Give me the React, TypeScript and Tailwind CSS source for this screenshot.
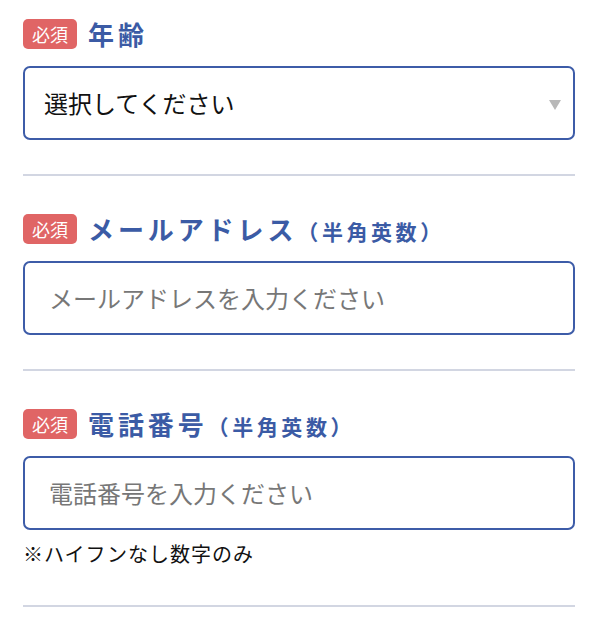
import React from "react";

const font = { fontFamily: '"Noto Sans CJK JP", "Noto Sans", sans-serif' };

function Badge() {
  return (
    <span className="inline-flex items-center justify-center w-[54px] h-[30px] rounded-[5px] bg-[#e06565] text-white text-[18px] leading-none shrink-0">
      必須
    </span>
  );
}

function Header({ title, sub }: { title: string; sub?: string }) {
  return (
    <div className="flex items-center gap-[11px] h-[30px]">
      <Badge />
      <span className="text-[#3b5ba5] font-bold text-[26px] tracking-[0.15em] leading-none">
        {title}
        {sub && <span className="text-[21px] tracking-[0.17em]">{sub}</span>}
      </span>
    </div>
  );
}

export default function App() {
  return (
    <div className="bg-white w-[598px] h-[626px] px-[23px] pt-[19px]" style={font}>
      {/* Age */}
      <div className="pb-[34px] border-b-2 border-[#d2d6e2]">
        <Header title="年齢" />
        <div className="mt-[17px] h-[74px] rounded-[7px] border-2 border-[#3d5ca8] flex items-center justify-between pl-[19px] pr-[12px]">
          <span className="text-[24px] text-[#111]">選択してください</span>
          <svg width="12" height="10" viewBox="0 0 12 10" className="mt-[4px]">
            <polygon points="0,0 12,0 6,10" fill="#b8b8b8" />
          </svg>
        </div>
      </div>
      {/* Email */}
      <div className="pt-[38px] pb-[34px] border-b-2 border-[#d2d6e2]">
        <Header title="メールアドレス" sub="（半角英数）" />
        <div className="mt-[17px] h-[74px] rounded-[7px] border-2 border-[#3d5ca8] flex items-center pl-[24px]">
          <span className="text-[24px] text-[#777]">メールアドレスを入力ください</span>
        </div>
      </div>
      {/* Phone */}
      <div className="pt-[38px] pb-[37px] border-b-2 border-[#d2d6e2]">
        <Header title="電話番号" sub="（半角英数）" />
        <div className="mt-[17px] h-[74px] rounded-[7px] border-2 border-[#3d5ca8] flex items-center pl-[24px]">
          <span className="text-[24px] text-[#777]">電話番号を入力ください</span>
        </div>
        <div className="mt-[10px] text-[20px] tracking-[0.05em] text-[#111] leading-[28px]">※ハイフンなし数字のみ</div>
      </div>
    </div>
  );
}
